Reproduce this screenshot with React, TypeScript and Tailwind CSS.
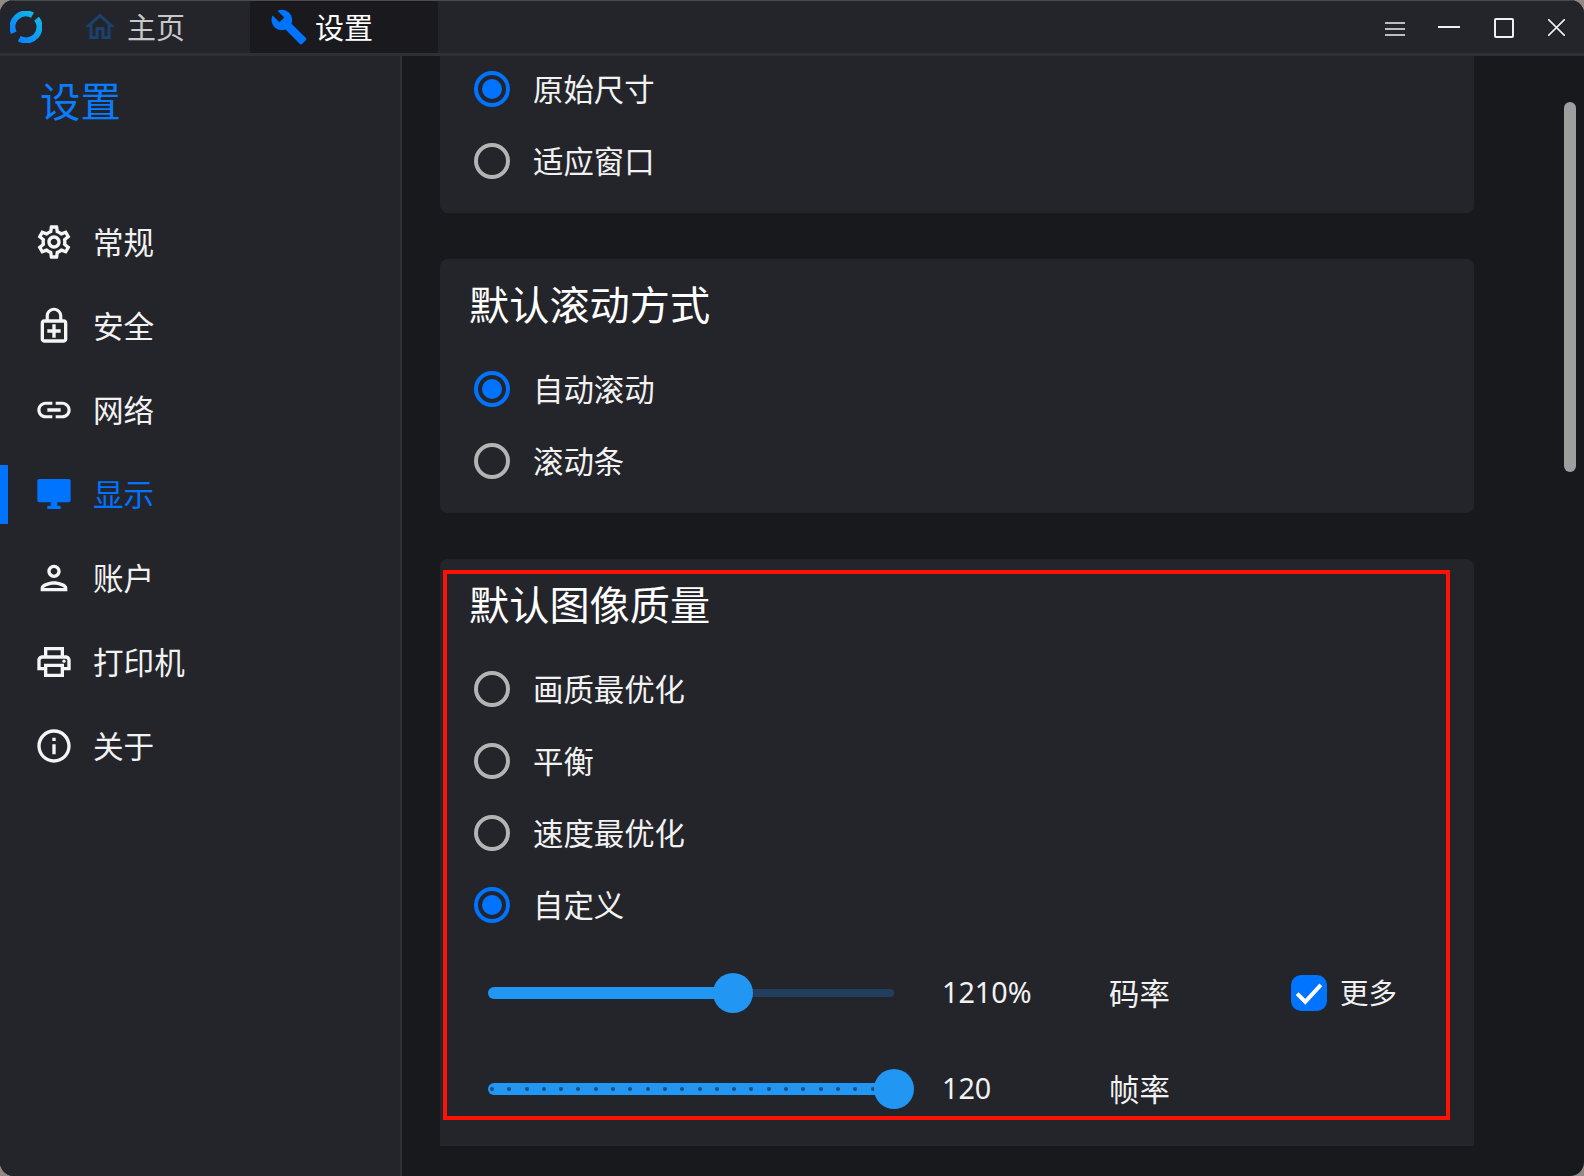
import {
  MdBuild,
  MdInfoOutline,
  MdLink,
  MdOutlineEnhancedEncryption,
  MdOutlineHome,
  MdOutlinePerson,
  MdOutlinePrint,
  MdOutlineSettings,
} from "react-icons/md";
import type { ReactNode } from "react";

const CJK = "font-['Noto_Sans_CJK_SC','Noto_Sans',sans-serif]";

const MonitorIcon = ({ className }: { className?: string }) => (
  <svg viewBox="0 0 24 24" fill="currentColor" className={className}>
    <path d="M3.2 3h17.6c.7 0 1.2.5 1.2 1.2v11.6c0 .7-.5 1.2-1.2 1.2H14v2h2v2H8v-2h2v-2H3.2C2.5 17 2 16.5 2 15.8V4.2C2 3.5 2.5 3 3.2 3z" />
  </svg>
);

const Logo = () => (
  <svg viewBox="0 0 32 32" className="h-8 w-8" fill="none">
    <defs>
      <linearGradient id="logo" x1="0" y1="1" x2="1" y2="0">
        <stop offset="0" stopColor="#0a84ff" />
        <stop offset="1" stopColor="#12b5e8" />
      </linearGradient>
    </defs>
    <path d="M3.76 21.71A13.5 13.5 0 0 1 22.54 4.19" stroke="url(#logo)" strokeWidth="6" />
    <path d="M26.64 7.69A13.5 13.5 0 0 1 9.25 27.69" stroke="url(#logo)" strokeWidth="6" />
  </svg>
);

const Radio = ({ label, checked }: { label: string; checked?: boolean }) => (
  <div className="flex h-[72px] items-center pl-[34px]">
    {checked ? (
      <span className="flex h-9 w-9 items-center justify-center rounded-full border-[4px] border-[#0073ff]">
        <span className="h-5 w-5 rounded-full bg-[#0073ff]" />
      </span>
    ) : (
      <span className="h-9 w-9 rounded-full border-[4px] border-[#b4b4b4]" />
    )}
    <span className="ml-[23px] pb-[2px] text-[30.4px] leading-none text-[#f2f2f2]">{label}</span>
  </div>
);

const Card = ({ title, children }: { title: string; children: ReactNode }) => (
  <section className="rounded-lg bg-[#24252b] pb-[16px] pt-[17px]">
    <h2 className="pl-[29px] text-[40.2px] leading-[54px] text-white">{title}</h2>
    <div className="mt-[23px]">{children}</div>
  </section>
);

const nav = [
  { label: "常规", icon: MdOutlineSettings },
  { label: "安全", icon: MdOutlineEnhancedEncryption },
  { label: "网络", icon: MdLink },
  { label: "显示", icon: MonitorIcon, active: true },
  { label: "账户", icon: MdOutlinePerson },
  { label: "打印机", icon: MdOutlinePrint },
  { label: "关于", icon: MdInfoOutline },
];

const Sidebar = () => (
  <aside className="w-[402px] shrink-0 border-r-2 border-[#2e3036] bg-[#24252b]">
    <h1 className="pl-[40px] pt-[17px] text-[40.4px] leading-[54px] text-[#0a7cff]">设置</h1>
    <nav className="mt-[73px]">
      {nav.map((item) => {
        const Icon = item.icon;
        return (
          <div key={item.label} className="relative flex h-[84px] items-center pl-[34px]">
            {item.active && <span className="absolute left-0 top-[13px] h-[59px] w-2 bg-[#0073ff]" />}
            <Icon className={`h-10 w-10 ${item.active ? "text-[#0073ff]" : "text-[#f5f5f5]"}`} />
            <span className={`ml-[19px] pb-[1px] text-[30.6px] leading-none ${item.active ? "text-[#0073ff]" : "text-[#f2f2f2]"}`}>
              {item.label}
            </span>
          </div>
        );
      })}
    </nav>
  </aside>
);

const TitleBar = () => (
  <header className="flex h-[56px] shrink-0 items-stretch border-b-[3px] border-t border-b-[#2e3036] border-t-[#4a4c52] bg-[#24252b]">
    <div className="flex w-[82px] items-center pl-[10px]">
      <Logo />
    </div>
    <div className="flex w-[168px] items-center">
      <MdOutlineHome className="h-9 w-9 text-[#1b426f]" />
      <span className="ml-[9px] pb-[1px] text-[29px] leading-none text-[#c8c8c8]">主页</span>
    </div>
    <div className="flex w-[188px] items-center bg-[#1a1a1e] pl-[20px]">
      <MdBuild className="h-[38px] w-[38px] text-[#0073ff]" />
      <span className="ml-[7px] pb-[1px] text-[29px] leading-none text-white">设置</span>
    </div>
    <div className="ml-auto flex items-center gap-[34px] pr-[19px] text-[#f0f0f0]">
      <svg viewBox="0 0 20 14" className="-mr-[1px] mt-[3px] h-[14px] w-5" stroke="currentColor" strokeWidth="1.5">
        <path d="M0 1h20M0 7h20M0 13h20" />
      </svg>
      <span className="h-[2px] w-[22px] bg-current" />
      <span className="mt-[1px] h-5 w-5 rounded-[2px] border-2 border-current" />
      <svg viewBox="0 0 16 16" className="h-[17px] w-[17px]" stroke="currentColor" strokeWidth="1.5">
        <path d="M0 0l16 16M16 0L0 16" />
      </svg>
    </div>
  </header>
);

const App = () => (
  <div className={`h-[1176px] w-[1584px] overflow-hidden bg-[#8f8a86] ${CJK}`}>
    <div className="flex h-full flex-col overflow-hidden rounded-[14px] bg-[#18191d]">
      <TitleBar />
      <div className="flex min-h-0 flex-1">
        <Sidebar />
        <main className="relative min-w-0 flex-1 overflow-hidden pl-[38px] pr-[110px]">
          <div className="flex flex-col gap-[46px]">
            <section className="-mt-[3px] rounded-b-lg bg-[#24252b] pb-[16px]">
              <Radio label="原始尺寸" checked />
              <Radio label="适应窗口" />
            </section>
            <Card title="默认滚动方式">
              <Radio label="自动滚动" checked />
              <Radio label="滚动条" />
            </Card>
            <section className="relative h-[587px] rounded-t-lg bg-[#24252b] pt-[17px]">
              <h2 className="pl-[29px] text-[40.2px] leading-[54px] text-white">默认图像质量</h2>
              <div className="mt-[23px]">
                <Radio label="画质最优化" />
                <Radio label="平衡" />
                <Radio label="速度最优化" />
                <Radio label="自定义" checked />
              </div>
              <div className="mt-[20px] flex h-[64px] items-center pl-[48px]">
                <div className="relative h-[40px] w-[406px]">
                  <span className="absolute left-0 right-0 top-4 h-2 rounded-full bg-[#213f5c]" />
                  <span className="absolute left-0 top-[14px] h-3 w-[245px] rounded-full bg-[#2196f3]" />
                  <span className="absolute left-[225px] top-0 h-10 w-10 rounded-full bg-[#2196f3]" />
                </div>
                <span className="ml-[48px] w-[167px] pb-[1px] font-['Noto_Sans',sans-serif] text-[28.7px] leading-none text-[#f2f2f2]">1210%</span>
                <span className="w-[182px] pb-[2px] text-[30.4px] leading-none text-[#f2f2f2]">码率</span>
                <span className="flex h-9 w-9 items-center justify-center rounded-[10px] bg-[#0073ff]">
                  <svg viewBox="0 0 24 24" className="h-[30px] w-[30px]" fill="none" stroke="#fff" strokeWidth="3.2">
                    <path d="M2.5 12.5l6.5 6.5L21.5 5.5" />
                  </svg>
                </span>
                <span className="ml-[13px] pb-[2px] text-[28.5px] leading-none text-[#f2f2f2]">更多</span>
              </div>
              <div className="mt-[32px] flex h-[64px] items-center pl-[48px]">
                <div className="relative h-[40px] w-[406px]">
                  <span className="absolute left-0 right-0 top-[14px] flex h-3 items-center gap-[13.3px] overflow-hidden rounded-full bg-[#2196f3] pl-[2px]">
                    {Array.from({ length: 24 }, (_, i) => (
                      <span key={i} className="h-1 w-1 shrink-0 rounded-full bg-[#1a4f80]" />
                    ))}
                  </span>
                  <span className="absolute right-[-20px] top-0 h-10 w-10 rounded-full bg-[#2196f3]" />
                </div>
                <span className="ml-[48px] w-[167px] pb-[1px] font-['Noto_Sans',sans-serif] text-[28.7px] leading-none text-[#f2f2f2]">120</span>
                <span className="pb-[2px] text-[30.4px] leading-none text-[#f2f2f2]">帧率</span>
              </div>
              <div className="absolute left-[3px] top-[11px] h-[550px] w-[1007px] border-4 border-[#ff1206]" />
            </section>
          </div>
          <span className="absolute right-[8px] top-[46px] h-[370px] w-3 rounded-full bg-[#9e9e9e]" />
        </main>
      </div>
    </div>
  </div>
);

export default App;
